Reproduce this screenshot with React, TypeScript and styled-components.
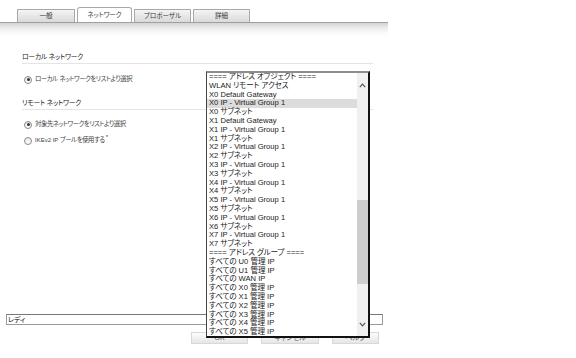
import React from 'react';
import styled, { createGlobalStyle } from 'styled-components';

const GlobalStyle = createGlobalStyle`
  html, body {
    margin: 0;
    padding: 0;
    background: #fff;
  }
  body {
    font-family: 'Liberation Sans', 'Noto Sans CJK JP', sans-serif;
    font-size: 8px;
    color: #333;
  }
`;

// the capture uses a narrow ui font for japanese; proportional kana (palt)
// gets close. line-height 0 keeps the bigger cjk metrics from pushing rows.
type CjkProps = { $size: number; $track: number };
const Cjk = styled.span<CjkProps>`
  line-height: 0;
  vertical-align: 0.3px;
  font-family: 'Noto Sans CJK JP', sans-serif;
  font-feature-settings: 'palt' 1;
  font-size: ${({ $size }) => $size}px;
  letter-spacing: ${({ $track }) => $track}px;
`;

const CJK_RUN = /([\u3000-\u30ff\u4e00-\u9fff\uff00-\uffef]+)/;

type JpProps = { text: string; size: number; track?: number };
const Jp = ({ text, size, track = 0 }: JpProps) => (
  <>
    {text
      .split(CJK_RUN)
      .filter(Boolean)
      .map((part, i) =>
        CJK_RUN.test(part) ? (
          <Cjk key={i} $size={size} $track={track}>
            {part}
          </Cjk>
        ) : (
          <React.Fragment key={i}>{part}</React.Fragment>
        ),
      )}
  </>
);

const Page = styled.div`
  position: relative;
  width: 576px;
  height: 358px;
  overflow: hidden;
`;

const Frame = styled.div`
  display: flex;
  flex-direction: column;
  width: 388px;
  height: 358px;
`;

const TabStrip = styled.div`
  display: flex;
  align-items: flex-end;
  gap: 2px;
  height: 22px;
  padding-left: 17px;
  box-sizing: border-box;
`;

type TabProps = { $active?: boolean; $width: number };
const Tab = styled.div<TabProps>`
  box-sizing: border-box;
  width: ${({ $width }) => $width}px;
  height: ${({ $active }) => ($active ? 15 : 13)}px;
  padding-top: ${({ $active }) => ($active ? 2 : 1)}px;
  border: 1px solid #a8a8a8;
  border-bottom: none;
  border-radius: ${({ $active }) => ($active ? '3px 3px 0 0' : '1px 1px 0 0')};
  background: ${({ $active }) =>
    $active ? '#fff' : 'linear-gradient(#f4f4f4, #dadada)'};
  color: #3a3a3a;
  text-align: center;
  line-height: 10px;
`;

const TabBar = styled.div`
  height: 14px;
  border-top: 1px solid #a0a0a0;
  background: linear-gradient(#d4d4d4 0, #ececec 5px, #fafafa 10px, #fff 14px);
`;

const Body = styled.div`
  flex: 1;
  padding-left: 22px;
  width: 351px;
`;

type HeadingProps = { $gap: number };
const Heading = styled.div<HeadingProps>`
  margin-top: ${({ $gap }) => $gap}px;
  height: 10px;
  line-height: 10px;
  padding-bottom: 1px;
  border-bottom: 1px solid #e4e4e4;
  color: #222;
  font-size: 6px;
`;

type RowProps = { $gap: number };
const RadioRow = styled.div<RowProps>`
  display: flex;
  align-items: center;
  gap: 3px;
  height: 11px;
  line-height: 11px;
  margin-top: ${({ $gap }) => $gap}px;
  padding-left: 2px;
  color: #444;
  font-size: 6px;
`;

const Label = styled.span`
  white-space: nowrap;
  line-height: 11px;
`;

type RadioProps = { $checked?: boolean };
const Radio = styled.span<RadioProps>`
  position: relative;
  flex: none;
  display: inline-block;
  box-sizing: border-box;
  width: 8px;
  height: 8px;
  border: 1px solid #8a8a8a;
  border-radius: 50%;
  background: linear-gradient(#e8e8e8, #fff);

  &::after {
    content: '';
    display: ${({ $checked }) => ($checked ? 'block' : 'none')};
    position: absolute;
    left: 1.5px;
    top: 1.5px;
    width: 3px;
    height: 3px;
    border-radius: 50%;
    background: #333;
  }
`;

const Sup = styled.span`
  display: inline-block;
  vertical-align: top;
  margin-top: -3px;
  margin-left: 1px;
  font-size: 6px;
`;

const Footer = styled.div`
  display: flex;
  flex-direction: column;
  padding-bottom: 14px;
`;

const StatusBox = styled.div`
  box-sizing: border-box;
  margin-left: 6px;
  width: 377px;
  height: 11px;
  border: 1px solid #9a9a9a;
  border-top-color: #777;
  padding-left: 1px;
  line-height: 9px;
  color: #000;
`;

const Buttons = styled.div`
  display: flex;
  gap: 13px;
  margin-top: 7px;
  padding-left: 191px;
`;

type ButtonProps = { $width: number };
const Button = styled.div<ButtonProps>`
  box-sizing: border-box;
  width: ${({ $width }) => $width}px;
  height: 12px;
  border: 1px solid #d8d8d8;
  background: linear-gradient(#fdfdfd, #e6e6e6);
  color: #555;
  text-align: center;
  line-height: 10px;
  font-size: 7px;
`;

const ListBox = styled.div`
  position: absolute;
  left: 206px;
  top: 71px;
  width: 164px;
  height: 267px;
  box-sizing: border-box;
  display: flex;
  background: #fff;
  border-top: 2px solid #8c8c8c;
  border-left: 1px solid #444;
  border-right: 2px solid #111;
  border-bottom: 2px solid #111;
`;

const Items = styled.div`
  flex: 1;
  overflow: hidden;
`;

type ItemProps = { $selected?: boolean };
const Item = styled.div<ItemProps>`
  height: 8.8px;
  line-height: 8.8px;
  padding-left: 2px;
  white-space: nowrap;
  font-size: 7.6px;
  color: #1a1a1a;
  background: ${({ $selected }) => ($selected ? '#dcdcdc' : 'transparent')};
`;

const ScrollBar = styled.div`
  display: flex;
  flex-direction: column;
  align-items: center;
  width: 11px;
  background: #f0f0f0;
`;

const Arrow = styled.div`
  display: flex;
  align-items: center;
  justify-content: center;
  width: 11px;
  height: 24px;
`;

const Thumb = styled.div`
  width: 11px;
  height: 84px;
  margin-top: 103px;
  background: #cdcdcd;
`;

const Spacer = styled.div`
  flex: 1;
`;

const Chevron = ({ up }: { up?: boolean }) => (
  <svg width="7" height="5" viewBox="0 0 7 5">
    <path
      d={up ? 'M0.8 4.2 L3.5 1.2 L6.2 4.2' : 'M0.8 0.8 L3.5 3.8 L6.2 0.8'}
      fill="none"
      stroke="#555"
      strokeWidth="1.2"
    />
  </svg>
);

const items = [
  '==== アドレス オブジェクト ====',
  'WLAN リモート アクセス',
  'X0 Default Gateway',
  'X0 IP - Virtual Group 1',
  'X0 サブネット',
  'X1 Default Gateway',
  'X1 IP - Virtual Group 1',
  'X1 サブネット',
  'X2 IP - Virtual Group 1',
  'X2 サブネット',
  'X3 IP - Virtual Group 1',
  'X3 サブネット',
  'X4 IP - Virtual Group 1',
  'X4 サブネット',
  'X5 IP - Virtual Group 1',
  'X5 サブネット',
  'X6 IP - Virtual Group 1',
  'X6 サブネット',
  'X7 IP - Virtual Group 1',
  'X7 サブネット',
  '==== アドレス グループ ====',
  'すべての U0 管理 IP',
  'すべての U1 管理 IP',
  'すべての WAN IP',
  'すべての X0 管理 IP',
  'すべての X1 管理 IP',
  'すべての X2 管理 IP',
  'すべての X3 管理 IP',
  'すべての X4 管理 IP',
  'すべての X5 管理 IP',
];

const tabs = [
  { label: '一般', width: 58 },
  { label: 'ネットワーク', width: 55, active: true },
  { label: 'プロポーザル', width: 57 },
  { label: '詳細', width: 57 },
];

const LABEL = { size: 6.4, track: -0.45 };
const HEAD = { size: 6.8, track: -0.25 };

const App = () => (
  <Page>
    <GlobalStyle />
    <Frame>
      <TabStrip>
        {tabs.map((t) => (
          <Tab key={t.label} $width={t.width} $active={t.active}>
            <Jp text={t.label} size={6.6} track={-0.1} />
          </Tab>
        ))}
      </TabStrip>
      <TabBar />
      <Body>
        <Heading $gap={15}>
          <Jp text="ローカル ネットワーク" {...HEAD} />
        </Heading>
        <RadioRow $gap={10}>
          <Radio $checked />
          <Label>
            <Jp text="ローカル ネットワークをリストより選択" {...LABEL} />
          </Label>
        </RadioRow>
        <Heading $gap={13}>
          <Jp text="リモート ネットワーク" {...HEAD} />
        </Heading>
        <RadioRow $gap={9}>
          <Radio $checked />
          <Label>
            <Jp text="対象先ネットワークをリストより選択" {...LABEL} />
          </Label>
        </RadioRow>
        <RadioRow $gap={5}>
          <Radio />
          <Label>
            <Jp text="IKEv2 IP プールを使用する" {...LABEL} />
            <Sup>*</Sup>
          </Label>
        </RadioRow>
      </Body>
      <Footer>
        <StatusBox>
          <Jp text="レディ" size={6.8} />
        </StatusBox>
        <Buttons>
          <Button $width={57}>OK</Button>
          <Button $width={58}>
            <Jp text="キャンセル" size={7} />
          </Button>
          <Button $width={47}>
            <Jp text="ヘルプ" size={7} />
          </Button>
        </Buttons>
      </Footer>
    </Frame>
    <ListBox>
      <Items>
        {items.map((it, i) => (
          <Item key={it} $selected={i === 3}>
            <Jp text={it} size={7.6} track={-0.15} />
          </Item>
        ))}
      </Items>
      <ScrollBar>
        <Arrow>
          <Chevron up />
        </Arrow>
        <Thumb />
        <Spacer />
        <Arrow>
          <Chevron />
        </Arrow>
      </ScrollBar>
    </ListBox>
  </Page>
);

export default App;
